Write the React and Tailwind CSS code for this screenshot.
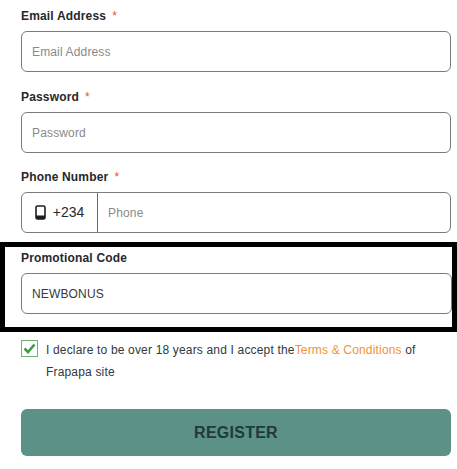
const font = { fontFamily: '"Liberation Sans", Arial, sans-serif' };

function Label({ children, star }) {
  return (
    <div className="flex h-[16px] items-center text-[12px] font-bold leading-[16px] tracking-[0.17px] text-[#26282c]">
      <span>{children}</span>
      {star && <span className="ml-[6px] text-[12px] font-normal text-[#d9534f]">*</span>}
    </div>
  );
}

function Field({ placeholder, value }) {
  return (
    <div className="mt-[7px] flex h-[41px] items-center rounded-[6px] border border-[#7c7c7c] bg-white px-[10px]">
      <span className={`text-[12px] tracking-[0.15px] ${value ? "text-[#333a3a]" : "text-[#8a8a8a]"}`}>{value || placeholder}</span>
    </div>
  );
}

export default function App() {
  return (
    <div className="h-[469px] w-[457px] overflow-hidden bg-white" style={font}>
      <div className="pl-[21px] pr-[6px] pt-[8px]">
        <Label star>Email Address</Label>
        <Field placeholder="Email Address" />
        <div className="mt-[17px]">
          <Label star>Password</Label>
          <Field placeholder="Password" />
        </div>
        <div className="mt-[16px]">
          <Label star>Phone Number</Label>
          <div className="mt-[7px] flex h-[41px] items-stretch rounded-[6px] border border-[#7c7c7c] bg-white">
            <div className="flex w-[76px] items-center justify-center gap-[7px] border-r border-[#6a6a6a] text-[14px] text-[#26282c]">
              <svg width="11" height="15" viewBox="0 0 11 15" fill="none">
                <rect x="1" y="1" width="9" height="13" rx="1.6" fill="#fff" stroke="#1e1e1e" strokeWidth="1.6" />
                <rect x="1" y="10.5" width="9" height="3.5" fill="#1e1e1e" />
              </svg>
              <span>+234</span>
            </div>
            <div className="flex items-center pl-[10px] text-[12px] tracking-[0.15px] text-[#8a8a8a]">Phone</div>
          </div>
        </div>
      </div>
      <div className="mt-[9px] h-[90px] border-[5px] border-black pl-[16px] pt-[3px]">
        <Label>Promotional Code</Label>
        <Field value="NEWBONUS" />
      </div>
      <div className="pl-[21px] pr-[6px]">
        <div className="mt-[8px] flex">
          <div className="flex h-[17px] w-[17px] shrink-0 items-center justify-center border border-[#6fb36f] bg-white">
            <svg width="13" height="11" viewBox="0 0 13 11" fill="none">
              <path d="M1.5 5.5 L5 9 L11.5 1.5" stroke="#3f9a45" strokeWidth="2.6" />
            </svg>
          </div>
          <p className="-mt-[1px] ml-[8px] w-[400px] text-[12px] leading-[22px] tracking-[0.17px] text-[#33383c]">
            I declare to be over 18 years and I accept the<span className="text-[#f0923a]">Terms &amp; Conditions</span> of Frapapa site
          </p>
        </div>
        <button className="mt-[26px] flex h-[47px] w-[430px] items-center justify-center rounded-[6px] bg-[#5c9187] text-[16px] font-bold tracking-[0.25px] text-[#1f3a3a]">
          REGISTER
        </button>
      </div>
    </div>
  );
}
